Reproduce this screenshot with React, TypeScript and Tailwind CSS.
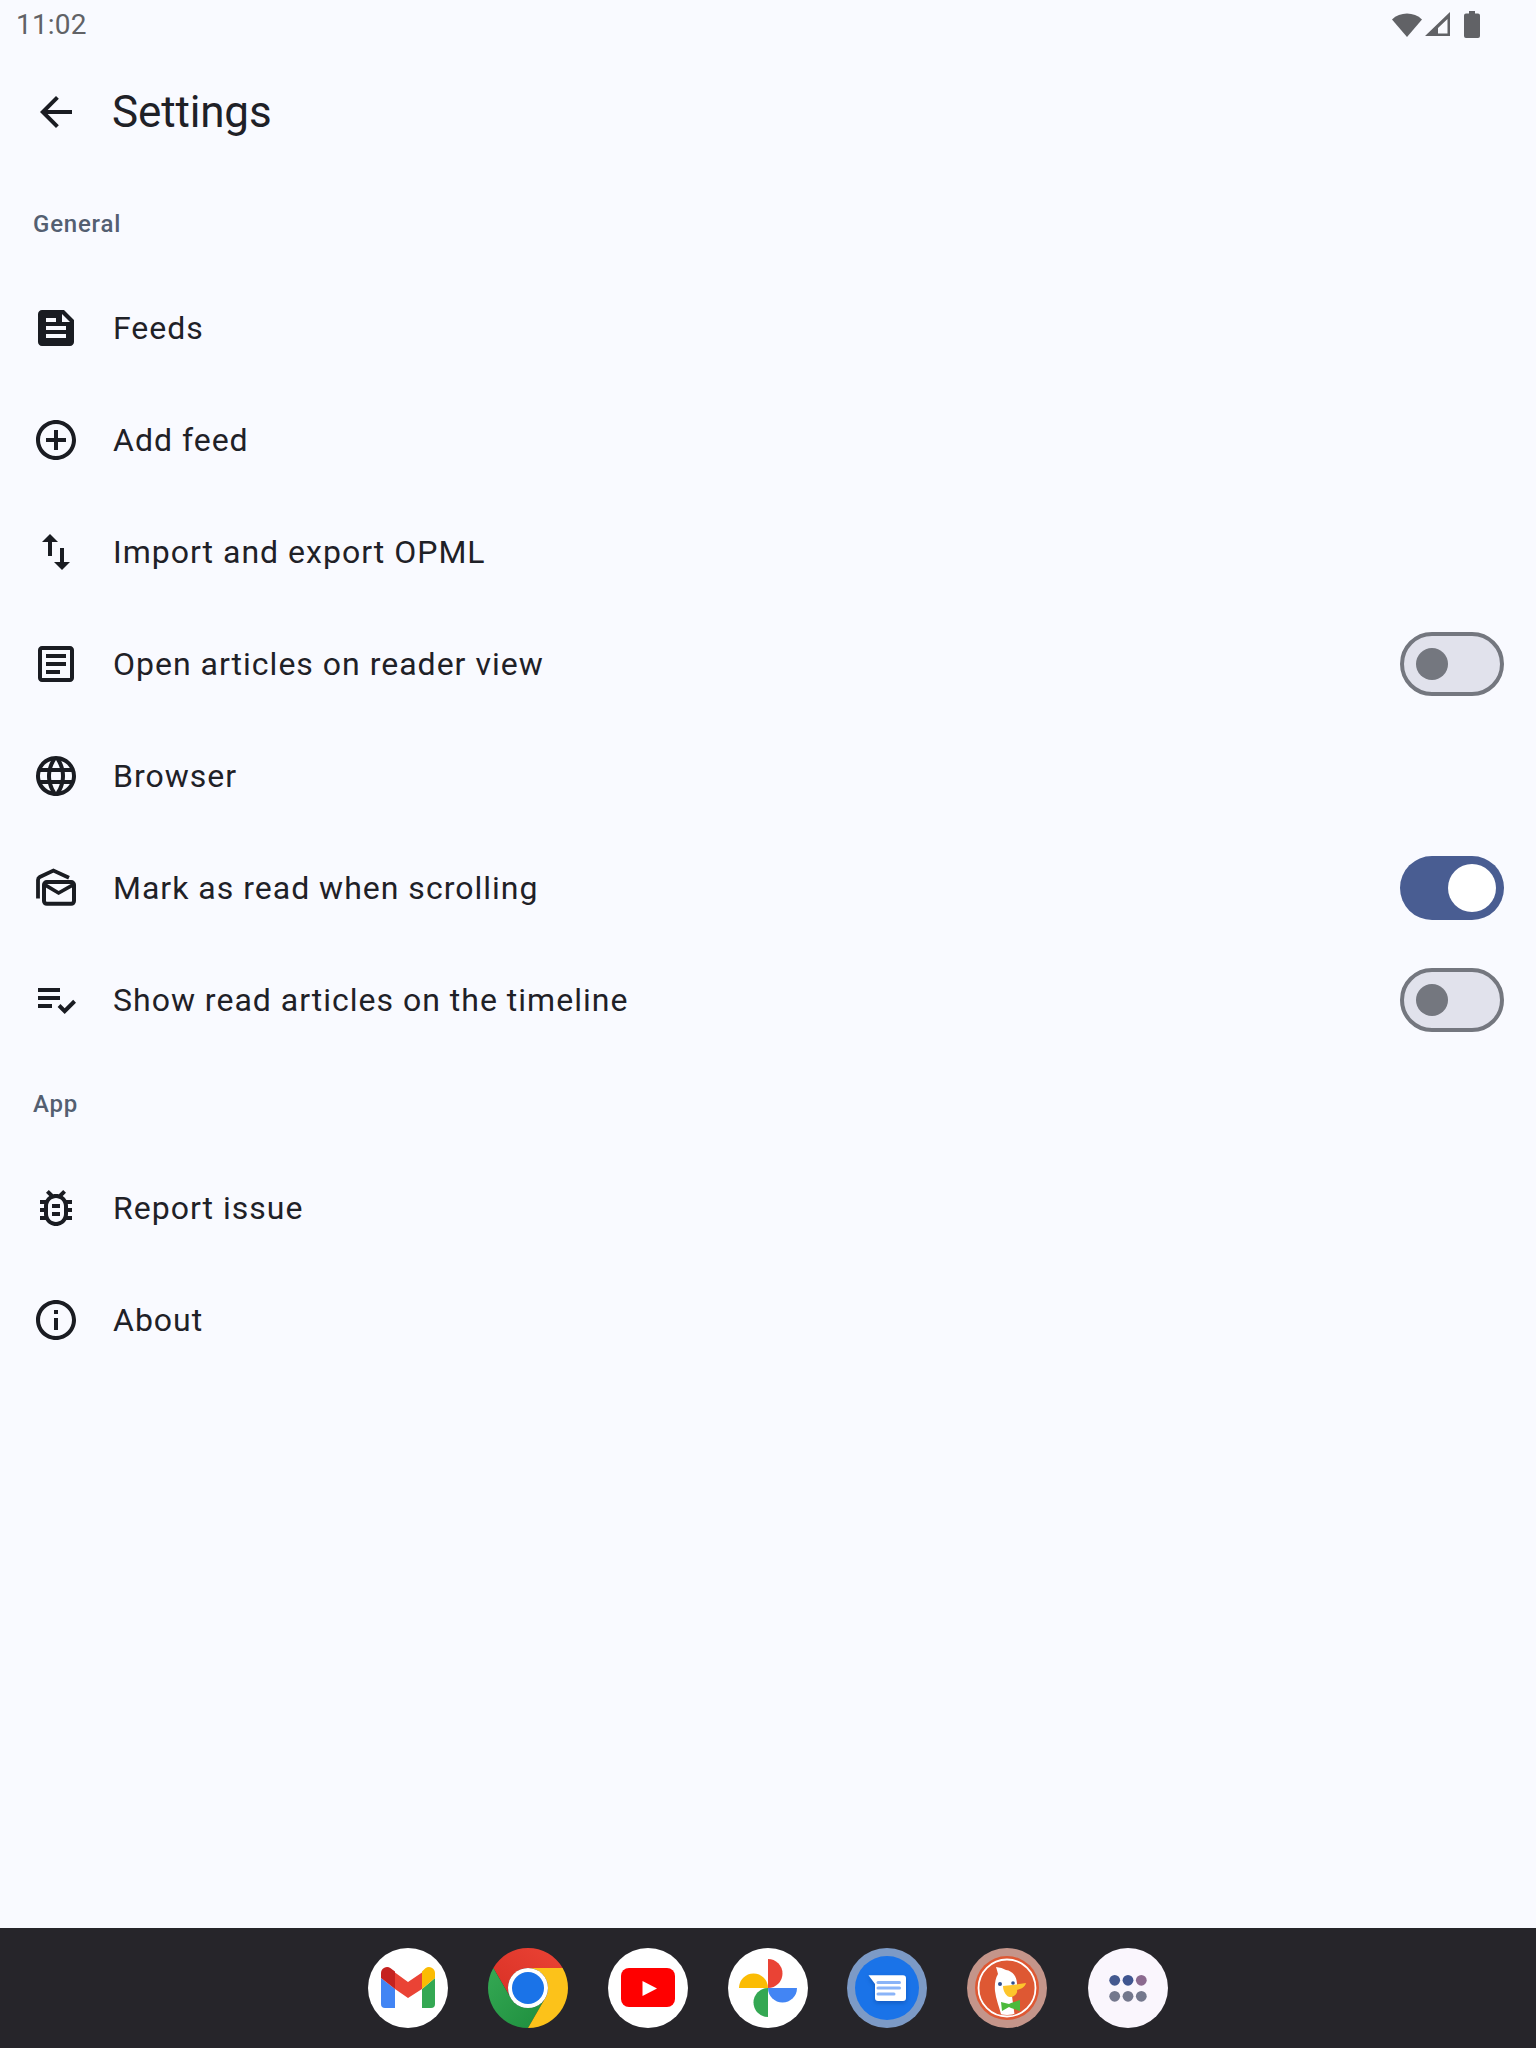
import React from 'react';

const ICONS: Record<string, string> = {
  back: 'M20 11H7.83l5.59-5.59L12 4l-8 8 8 8 1.41-1.41L7.83 13H20v-2z',
  feed: 'M16 3H5C3.9 3 3.01 3.9 3.01 5L3 19c0 1.1.89 2 1.99 2H19c1.1 0 2-.9 2-2V8L16 3zM7 7h5v2H7V7zm10 10H7v-2h10v2zm0-4H7v-2h10v2zm-2-4V5l4 4h-4z',
  add: 'M13 7h-2v4H7v2h4v4h2v-4h4v-2h-4V7zm-1-5C6.48 2 2 6.48 2 12s4.48 10 10 10 10-4.48 10-10S17.52 2 12 2zm0 18c-4.41 0-8-3.59-8-8s3.59-8 8-8 8 3.59 8 8-3.59 8-8 8z',
  importExport: 'M9 3 5 6.99h3V14h2V6.99h3L9 3zm7 14.01V10h-2v7.01h-3L15 21l4-3.99h-3z',
  article: 'M19 5v14H5V5h14m0-2H5c-1.1 0-2 .9-2 2v14c0 1.1.9 2 2 2h14c1.1 0 2-.9 2-2V5c0-1.1-.9-2-2-2zM14 17H7v-2h7v2zm3-4H7v-2h10v2zm0-4H7V7h10v2z',
  language: 'M11.99 2C6.47 2 2 6.48 2 12s4.47 10 9.99 10C17.52 22 22 17.52 22 12S17.52 2 11.99 2zm6.93 6h-2.95c-.32-1.25-.78-2.45-1.38-3.56 1.84.63 3.37 1.91 4.33 3.56zM12 4.04c.83 1.2 1.48 2.53 1.91 3.96h-3.82c.43-1.43 1.08-2.76 1.91-3.96zM4.26 14C4.1 13.36 4 12.69 4 12s.1-1.36.26-2h3.38c-.08.66-.14 1.32-.14 2 0 .68.06 1.34.14 2H4.26zm.82 2h2.95c.32 1.25.78 2.45 1.38 3.56-1.84-.63-3.37-1.9-4.33-3.56zm2.95-8H5.08c.96-1.66 2.49-2.93 4.33-3.56C8.81 5.55 8.35 6.75 8.03 8zM12 19.96c-.83-1.2-1.48-2.53-1.91-3.96h3.82c-.43 1.43-1.08 2.76-1.91 3.96zM14.34 14H9.66c-.09-.66-.16-1.32-.16-2 0-.68.07-1.35.16-2h4.68c.09.65.16 1.32.16 2 0 .68-.07 1.34-.16 2zm.25 5.56c.6-1.11 1.06-2.31 1.38-3.56h2.95c-.96 1.65-2.49 2.93-4.33 3.56zM16.36 14c.08-.66.14-1.32.14-2 0-.68-.06-1.34-.14-2h3.38c.16.64.26 1.31.26 2s-.1 1.36-.26 2h-3.38z',
  check: 'M3 10h11v2H3zm0-4h11v2H3zm0 8h7v2H3zm17.59-2.07-4.25 4.24-2.12-2.12-1.41 1.41L16.34 19 22 13.34z',
  bug: 'M20 8h-2.81c-.45-.78-1.07-1.45-1.82-1.96L17 4.41 15.59 3l-2.17 2.17C12.96 5.06 12.49 5 12 5c-.49 0-.96.06-1.41.17L8.41 3 7 4.41l1.62 1.63C7.88 6.55 7.26 7.22 6.81 8H4v2h2.09c-.05.33-.09.66-.09 1v1H4v2h2v1c0 .34.04.67.09 1H4v2h2.81c1.04 1.79 2.97 3 5.19 3s4.15-1.21 5.19-3H20v-2h-2.09c.05-.33.09-.66.09-1v-1h2v-2h-2v-1c0-.34-.04-.67-.09-1H20V8zm-4 7c0 2.21-1.79 4-4 4s-4-1.79-4-4v-4c0-2.21 1.79-4 4-4s4 1.79 4 4v4zm-6-1h4v2h-4zm0-4h4v2h-4z',
  info: 'M11 7h2v2h-2zm0 4h2v6h-2zm1-9C6.48 2 2 6.48 2 12s4.48 10 10 10 10-4.48 10-10S17.52 2 12 2zm0 18c-4.41 0-8-3.59-8-8s3.59-8 8-8 8 3.59 8 8-3.59 8-8 8z',
};

const Icon = ({ name }: { name: string }) => (
  <svg width="48" height="48" viewBox="0 0 24 24" fill="#1a1c22" className="shrink-0">
    <path d={ICONS[name]} />
  </svg>
);

// no good match in the packages, drawn by hand
const MarkAsReadIcon = () => (
  <svg width="48" height="48" viewBox="0 0 24 24" fill="none" stroke="#1a1c22" className="shrink-0">
    <path d="M3 17.2V8q0-1 .9-1.5L10.7 3.3l7.8 3.6" strokeWidth="1.9" />
    <rect x="6" y="9" width="15" height="10.9" rx="1.4" strokeWidth="2" />
    <path d="M6.3 10.3l7 4.2 7.4-4.2" strokeWidth="1.8" />
  </svg>
);

const Switch = ({ on }: { on?: boolean }) =>
  on ? (
    <div className="w-[104px] h-16 rounded-full bg-[#495d92] flex items-center justify-end pr-2 shrink-0">
      <div className="w-12 h-12 rounded-full bg-white" />
    </div>
  ) : (
    <div className="w-[104px] h-16 rounded-full bg-[#e1e2ec] border-4 border-[#74777f] flex items-center pl-3 shrink-0">
      <div className="w-8 h-8 rounded-full bg-[#74777f]" />
    </div>
  );

const Row = ({ icon, label, toggle }: { icon: React.ReactNode; label: string; toggle?: 'on' | 'off' }) => (
  <div className="h-[112px] flex items-center px-8">
    {icon}
    <span className="ml-[33px] flex-1 text-[32px] leading-[48px] tracking-[1px] text-[#1f2127]">{label}</span>
    {toggle && <Switch on={toggle === 'on'} />}
  </div>
);

const SectionLabel = ({ children }: { children: string }) => (
  <div className="h-24 flex items-center pl-[33px] text-[24px] font-medium tracking-[0.8px] text-[#545f71]">{children}</div>
);

const Gmail = () => (
  <div className="w-20 h-20 rounded-full bg-white">
    <svg width="80" height="80" viewBox="0 0 80 80">
      <path d="M13 30l14 11v19H17a4 4 0 0 1-4-4z" fill="#4285f4" />
      <path d="M67 30L54 41v19h9a4 4 0 0 0 4-4z" fill="#34a853" />
      <path d="M27 24.5L40 34l14-9.500V41L40 50 27 41z" fill="#ea4335" />
      <path d="M13 30v-5a6 6 0 0 1 9.600-4.800L27 23.500V41z" fill="#c5221f" />
      <path d="M67 30v-5a6 6 0 0 0-9.600-4.800L54 23.500V41z" fill="#fbbc04" />
    </svg>
  </div>
);

const Chrome = () => (
  <svg width="80" height="80" viewBox="0 0 80 80" className="shrink-0">
    <defs>
      <linearGradient id="chromeRed" x1="0" y1="1" x2="1" y2="0">
        <stop offset="0" stopColor="#d93025" />
        <stop offset="1" stopColor="#ea4335" />
      </linearGradient>
      <linearGradient id="chromeGreen" x1="1" y1="1" x2="0" y2="0">
        <stop offset="0" stopColor="#1e8e3e" />
        <stop offset="1" stopColor="#34a853" />
      </linearGradient>
    </defs>
    <path d="M5.360 20A40 40 0 0 1 74.640 20H40A20 20 0 0 0 22.680 50Z" fill="url(#chromeRed)" />
    <path d="M5.360 20A40 40 0 0 0 40 80L57.320 50A20 20 0 0 1 22.680 50Z" fill="url(#chromeGreen)" />
    <path d="M74.640 20A40 40 0 0 1 40 80L57.320 50A20 20 0 0 0 40 20Z" fill="#fcc21a" />
    <circle cx="40" cy="40" r="20" fill="#fff" />
    <circle cx="40" cy="40" r="16" fill="#1a73e8" />
  </svg>
);

const YouTube = () => (
  <div className="w-20 h-20 rounded-full bg-white">
    <svg width="80" height="80" viewBox="0 0 80 80">
      <rect x="13" y="20" width="54" height="39" rx="8" fill="#ff0000" />
      <path d="M34.500 33L49 40.500 34.500 48z" fill="#fff" />
    </svg>
  </div>
);

const Photos = () => (
  <div className="w-20 h-20 rounded-full bg-white">
    <svg width="80" height="80" viewBox="0 0 80 80">
      <path d="M40 11a14.500 14.500 0 0 1 0 29z" fill="#ea4335" />
      <path d="M11 40a14.500 14.500 0 0 1 29 0z" fill="#fbbc04" />
      <path d="M40 69a14.500 14.500 0 0 1 0-29z" fill="#34a853" />
      <path d="M69 40a14.500 14.500 0 0 1-29 0z" fill="#4285f4" />
    </svg>
  </div>
);

const Messages = () => (
  <svg width="80" height="80" viewBox="0 0 80 80" className="shrink-0 -translate-x-px">
    <defs>
      <filter id="bubbleShadow" x="-30%" y="-30%" width="160%" height="170%">
        <feGaussianBlur stdDeviation="2" />
      </filter>
    </defs>
    <circle cx="40" cy="40" r="40" fill="#7c9ac6" />
    <circle cx="40" cy="40" r="32" fill="#1a73e8" />
    <path d="M21.500 29.500H56a3 3 0 0 1 3 3V52a3 3 0 0 1-3 3H31a3 3 0 0 1-3-3V38z" fill="#0d47a1" opacity="0.55" filter="url(#bubbleShadow)" />
    <path d="M21.500 27.300H56a3 3 0 0 1 3 3V50a3 3 0 0 1-3 3H31a3 3 0 0 1-3-3V36z" fill="#fff" />
    <rect x="29.500" y="33" width="24.500" height="3" rx="1.500" fill="#8ab4f8" />
    <rect x="29.500" y="38.500" width="24.500" height="3" rx="1.500" fill="#8ab4f8" />
    <rect x="29.500" y="44.500" width="19" height="3" rx="1.500" fill="#8ab4f8" />
  </svg>
);

const DuckDuckGo = () => (
  <svg width="80" height="80" viewBox="0 0 80 80" className="shrink-0 -translate-x-px">
    <defs>
      <clipPath id="duckClip">
        <circle cx="40" cy="40" r="27" />
      </clipPath>
    </defs>
    <circle cx="40" cy="40" r="40" fill="#c4958a" />
    <circle cx="40" cy="40" r="32" fill="#de5833" />
    <circle cx="40" cy="40" r="28.500" fill="none" stroke="#fff" strokeWidth="1.800" />
    <g clipPath="url(#duckClip)">
      <path d="M29 19q6 .5 10 3c7 1 11 7 11 14 0 5-3 8-5 12l3 22H35c-2-9-6-18-7-27-.5-6 0-12 3-17q-1-4-2-7z" fill="#fff" />
      <path d="M36 38q10-1 23-3c-1 4-5 6-9 7 1 2-2 7-7 7-3 0-7-5-7-11z" fill="#fdc52c" />
      <path d="M34 54l8 2 2-1 9-3v11l-9-3-2-1-7 4z" fill="#4cba3c" />
    </g>
    <circle cx="33" cy="36" r="2" fill="#2d4f8e" />
    <circle cx="46" cy="35" r="1.800" fill="#2d4f8e" />
  </svg>
);

const AllApps = () => (
  <div className="w-20 h-20 rounded-full bg-[#faf6fd]">
    <svg width="80" height="80" viewBox="0 0 80 80">
      <circle cx="26.700" cy="32.300" r="5.400" fill="#44598f" />
      <circle cx="40" cy="32.300" r="5.400" fill="#3f5590" />
      <circle cx="53.300" cy="32.300" r="5.400" fill="#8b6a8f" />
      <circle cx="26.700" cy="48.300" r="5.400" fill="#74788d" />
      <circle cx="40" cy="48.300" r="5.400" fill="#74788d" />
      <circle cx="53.300" cy="48.300" r="5.400" fill="#74788d" />
    </svg>
  </div>
);

export default function App() {
  return (
    <div className="w-[1536px] h-[2048px] flex flex-col bg-[#f9faff] font-[Roboto,sans-serif] overflow-hidden">
      <div className="h-12 flex items-center justify-between pl-4 pr-[56px] shrink-0">
        <span className="mt-[2px] text-[28px] leading-[50px] tracking-[0.2px] text-[#616266]">11:02</span>
        <div className="flex items-center">
          <svg width="30" height="25" viewBox="0 0 30 25" fill="#616266">
            <path d="M0 7.500A22 22 0 0 1 30 7.500L15 25z" />
          </svg>
          <svg width="25" height="24" viewBox="0 0 25 24" fill="#616266" className="ml-[3px]">
            <path fillRule="evenodd" d="M0 24L25 0v24zM13 21.500h9.500V7L13 16z" />
          </svg>
          <svg width="16" height="27" viewBox="0 0 16 27" fill="#616266" className="ml-[14px]">
            <path d="M5 0h6v2.500h3a2 2 0 0 1 2 2V25a2 2 0 0 1-2 2H2a2 2 0 0 1-2-2V4.500a2 2 0 0 1 2-2h3z" />
          </svg>
        </div>
      </div>

      <div className="h-32 flex items-center px-8 shrink-0">
        <Icon name="back" />
        <span className="ml-8 text-[44px] leading-[56px] tracking-[-0.15px] text-[#1f2127]">Settings</span>
      </div>

      <div className="flex-1">
        <SectionLabel>General</SectionLabel>
        <Row icon={<Icon name="feed" />} label="Feeds" />
        <Row icon={<Icon name="add" />} label="Add feed" />
        <Row icon={<Icon name="importExport" />} label="Import and export OPML" />
        <Row icon={<Icon name="article" />} label="Open articles on reader view" toggle="off" />
        <Row icon={<Icon name="language" />} label="Browser" />
        <Row icon={<MarkAsReadIcon />} label="Mark as read when scrolling" toggle="on" />
        <Row icon={<Icon name="check" />} label="Show read articles on the timeline" toggle="off" />
        <SectionLabel>App</SectionLabel>
        <Row icon={<Icon name="bug" />} label="Report issue" />
        <Row icon={<Icon name="info" />} label="About" />
      </div>

      <div className="h-[120px] bg-[#26252a] flex items-center justify-center gap-10 shrink-0">
        <Gmail />
        <Chrome />
        <YouTube />
        <Photos />
        <Messages />
        <DuckDuckGo />
        <AllApps />
      </div>
    </div>
  );
}
